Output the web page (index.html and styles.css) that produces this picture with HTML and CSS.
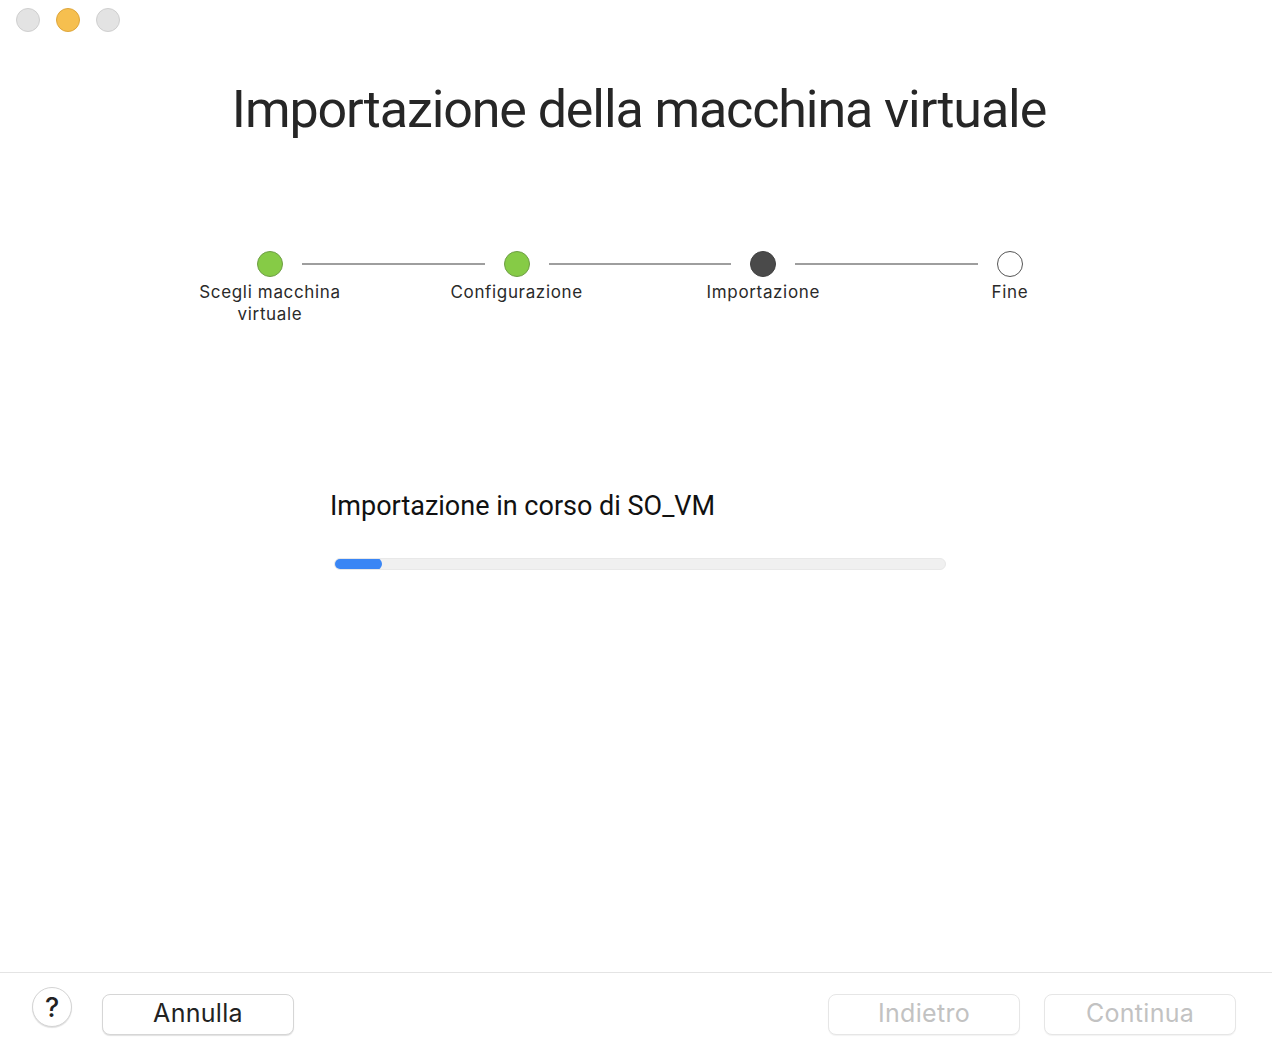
FILE: index.html
```html
<!DOCTYPE html>
<html lang="it">
<head>
<meta charset="utf-8">
<title>Importazione della macchina virtuale</title>
<link rel="stylesheet" href="styles.css">
</head>
<body>
<div class="window">
  <div class="titlebar">
    <span class="light light-gray"></span>
    <span class="light light-yellow"></span>
    <span class="light light-gray"></span>
  </div>
  <main class="content">
    <h1 class="title">Importazione della macchina virtuale</h1>
    <div class="stepper">
      <div class="track">
        <span class="dot dot-done"></span>
        <span class="line"></span>
        <span class="dot dot-done"></span>
        <span class="line"></span>
        <span class="dot dot-current"></span>
        <span class="line"></span>
        <span class="dot dot-todo"></span>
      </div>
      <div class="labels">
        <span class="label">Scegli macchina<br>virtuale</span>
        <span class="label">Configurazione</span>
        <span class="label">Importazione</span>
        <span class="label">Fine</span>
      </div>
    </div>
    <section class="progress">
      <p class="progress-text">Importazione in corso di SO_VM</p>
      <div class="bar"><div class="bar-fill" style="width:48px"></div></div>
    </section>
  </main>
  <footer class="footer">
    <button class="help">?</button>
    <button class="btn btn-cancel">Annulla</button>
    <span class="spacer"></span>
    <button class="btn btn-disabled">Indietro</button>
    <button class="btn btn-disabled">Continua</button>
  </footer>
</div>
</body>
</html>
```
FILE: styles.css
```css
* { box-sizing: border-box; }
html, body { margin: 0; padding: 0; }
body {
  width: 1272px;
  height: 1056px;
  background: #ffffff;
  font-family: Inter, "Noto Sans", "Liberation Sans", sans-serif;
  overflow: hidden;
}
.window {
  width: 1272px;
  height: 1056px;
  background: #ffffff;
  display: flex;
  flex-direction: column;
}
.titlebar {
  height: 40px;
  display: flex;
  align-items: center;
  gap: 16px;
  padding-left: 16px;
}
.light {
  width: 24px;
  height: 24px;
  border-radius: 50%;
  display: block;
}
.light-gray { background: #e3e3e3; border: 1px solid #cfcfcf; }
.light-yellow { background: #f6bf4f; border: 1px solid #dea63c; }

.content {
  flex: 1;
  display: flex;
  flex-direction: column;
}
.title {
  margin: 38px 0 0 0;
  text-align: center;
  font-family: Roboto, Inter, "Liberation Sans", sans-serif;
  font-weight: 400;
  font-size: 52px;
  line-height: 64px;
  letter-spacing: -1.1px;
  color: #262626;
  padding-left: 6px;
}
.stepper {
  margin-top: 109px;
  display: flex;
  flex-direction: column;
}
.track {
  display: flex;
  align-items: center;
  margin-left: 257px;
  width: 766px;
}
.dot {
  width: 26px;
  height: 26px;
  border-radius: 50%;
  flex: none;
}
.dot-done { background: #86cb46; border: 1px solid #6e9e45; }
.dot-current { background: #4a4a4a; border: 1px solid #404040; }
.dot-todo { background: #ffffff; border: 1px solid #555555; }
.line {
  flex: 1;
  height: 2px;
  background: #9e9e9e;
  margin: 0 19px;
}
.labels {
  display: grid;
  grid-template-columns: repeat(4, 246.67px);
  margin-left: 146.67px;
  margin-top: 4px;
}
.label {
  text-align: center;
  font-size: 17px;
  line-height: 22px;
  letter-spacing: 0.65px;
  color: #2a2a2a;
}
.progress {
  margin-top: 166px;
  margin-left: 330px;
  width: 616px;
}
.progress-text {
  margin: 0;
  font-family: Roboto, Inter, "Liberation Sans", sans-serif;
  font-size: 27px;
  line-height: 30px;
  color: #111111;
  letter-spacing: 0;
}
.bar {
  margin-top: 37px;
  margin-left: 4px;
  width: 612px;
  height: 12px;
  border-radius: 6px;
  background: #f0f0f0;
  border: 1px solid #e8e8e8;
  overflow: hidden;
}
.bar-fill {
  background: #3a86f5;
  border-radius: 6px;
  margin: -1px 0 0 -1px;
  height: 12px;
}
.footer {
  height: 84px;
  border-top: 1px solid #e4e4e4;
  display: flex;
  align-items: center;
  padding: 0 36px 0 32px;
  gap: 24px;
}
.help {
  width: 40px;
  height: 40px;
  border-radius: 50%;
  border: 1px solid #d4d4d4;
  background: #ffffff;
  box-shadow: 0 1px 1px rgba(0,0,0,0.12);
  font-family: inherit;
  font-size: 27px;
  font-weight: 500;
  color: #222;
  padding: 0;
  margin-top: -15px;
  display: flex;
  align-items: center;
  justify-content: center;
  line-height: 1;
}
.btn {
  width: 192px;
  height: 41px;
  border-radius: 8px;
  border: 1px solid #d6d6d6;
  background: #ffffff;
  box-shadow: 0 1px 1px rgba(0,0,0,0.12);
  font-family: inherit;
  font-size: 25px;
  letter-spacing: 0.3px;
  color: #222;
  padding: 0 0 2px 0;
  line-height: 1;
}
.btn-cancel { margin-left: 6px; }
.spacer { flex: 1; }
.btn-disabled {
  color: #c2c2c2;
  border-color: #e6e6e6;
  box-shadow: 0 1px 1px rgba(0,0,0,0.05);
}
```
